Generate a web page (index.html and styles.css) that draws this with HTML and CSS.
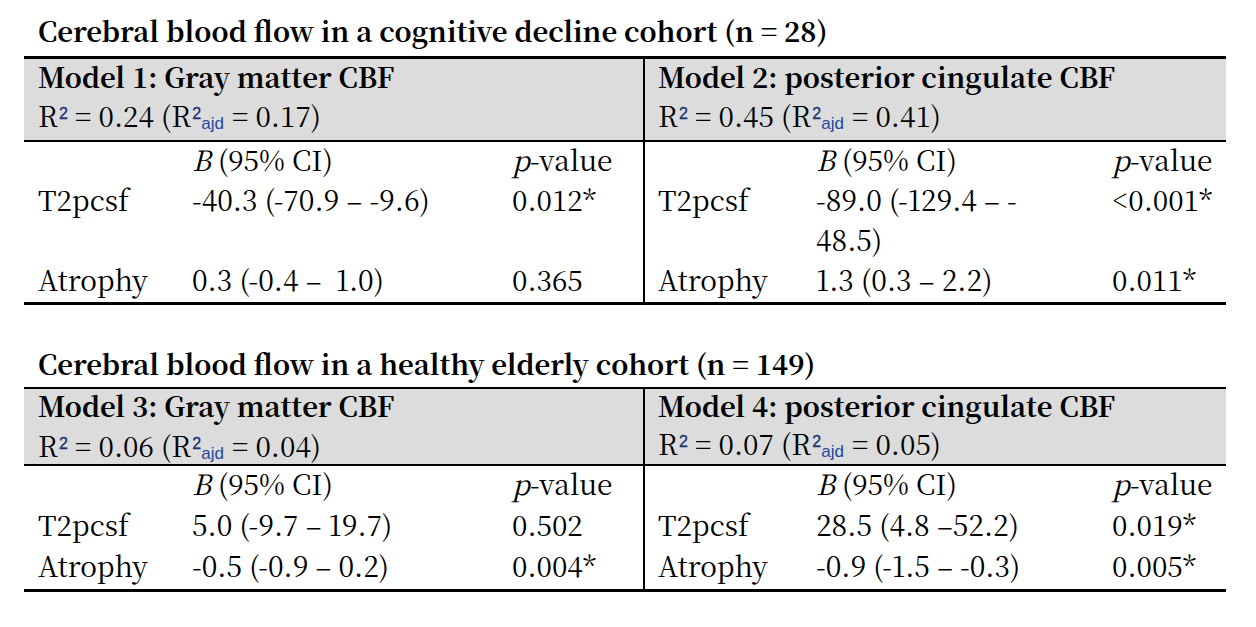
FILE: index.html
```html
<!DOCTYPE html>
<html lang="en">
<head>
<meta charset="utf-8">
<title>Cerebral blood flow models</title>
<link rel="stylesheet" href="styles.css">
</head>
<body>
<main class="page">
  <section class="block first">
    <h2 class="title">Cerebral blood flow in a cognitive decline cohort (n = 28)</h2>
    <div class="tbl t1">
      <div class="hd left">
        <div class="model">Model 1: Gray matter CBF</div>
        <div class="r2">R<sup class="sq">2</sup> = 0.24 (R<sup class="sq">2</sup><sub class="aj">ajd</sub> = 0.17)</div>
      </div>
      <div class="hd right">
        <div class="model">Model 2: posterior cingulate CBF</div>
        <div class="r2">R<sup class="sq">2</sup> = 0.45 (R<sup class="sq">2</sup><sub class="aj">ajd</sub> = 0.41)</div>
      </div>

      <div class="c c1"></div>
      <div class="c c2"><i>B</i> (95% CI)</div>
      <div class="c c3"><i>p</i>-value</div>
      <div class="c c4"></div>
      <div class="c c5"><i>B</i> (95% CI)</div>
      <div class="c c6"><i>p</i>-value</div>

      <div class="c c1">T2pcsf</div>
      <div class="c c2">-40.3 (-70.9 – -9.6)</div>
      <div class="c c3">0.012*</div>
      <div class="c c4">T2pcsf</div>
      <div class="c c5">-89.0 (-129.4 – -<br>48.5)</div>
      <div class="c c6">&lt;0.001*</div>

      <div class="c c1">Atrophy</div>
      <div class="c c2">0.3 (-0.4 – &nbsp;1.0)</div>
      <div class="c c3">0.365</div>
      <div class="c c4">Atrophy</div>
      <div class="c c5">1.3 (0.3 – 2.2)</div>
      <div class="c c6">0.011*</div>
    </div>
  </section>

  <section class="block second">
    <h2 class="title">Cerebral blood flow in a healthy elderly cohort (n = 149)</h2>
    <div class="tbl t2">
      <div class="hd left">
        <div class="model">Model 3: Gray matter CBF</div>
        <div class="r2">R<sup class="sq">2</sup> = 0.06 (R<sup class="sq">2</sup><sub class="aj">ajd</sub> = 0.04)</div>
      </div>
      <div class="hd right">
        <div class="model">Model 4: posterior cingulate CBF</div>
        <div class="r2">R<sup class="sq">2</sup> = 0.07 (R<sup class="sq">2</sup><sub class="aj">ajd</sub> = 0.05)</div>
      </div>

      <div class="c c1"></div>
      <div class="c c2"><i>B</i> (95% CI)</div>
      <div class="c c3"><i>p</i>-value</div>
      <div class="c c4"></div>
      <div class="c c5"><i>B</i> (95% CI)</div>
      <div class="c c6"><i>p</i>-value</div>

      <div class="c c1">T2pcsf</div>
      <div class="c c2">5.0 (-9.7 – 19.7)</div>
      <div class="c c3">0.502</div>
      <div class="c c4">T2pcsf</div>
      <div class="c c5">28.5 (4.8 –52.2)</div>
      <div class="c c6">0.019*</div>

      <div class="c c1">Atrophy</div>
      <div class="c c2">-0.5 (-0.9 – 0.2)</div>
      <div class="c c3">0.004*</div>
      <div class="c c4">Atrophy</div>
      <div class="c c5">-0.9 (-1.5 – -0.3)</div>
      <div class="c c6">0.005*</div>
    </div>
  </section>
</main>
</body>
</html>
```

FILE: styles.css
```css
* { box-sizing: border-box; }

body {
  margin: 0;
  background: #ffffff;
  color: #000000;
  font-family: "Noto Serif CJK SC", "DejaVu Serif", serif;
}

.page {
  padding: 15px 0 0 24px;
}

.title {
  margin: 0 0 11px 14px;
  font-family: "Noto Serif CJK SC", "DejaVu Serif", serif;
  font-weight: bold;
  font-size: 27.5px;
  line-height: 30px;
  white-space: nowrap;
}

.second { margin-top: 43px; }
.second .title { margin-bottom: 9px; }

.tbl {
  display: grid;
  grid-template-columns: 154px 320px 147px 157px 296px 128px;
  width: 1202px;
  border-top: 3px solid #000;
  border-bottom: 3px solid #000;
  font-size: 28px;
  line-height: 40px;
}

.t2 {
  border-top-width: 2px;
  line-height: 41px;
}

.hd {
  grid-column: span 3;
  background: #dcdcdc;
  border-bottom: 2px solid #000;
  padding: 0 14px 6px 14px;
}

.hd.left { border-right: 2px solid #000; }
.hd.right { padding-left: 13px; }

.model {
  margin-top: -2px;
  font-weight: bold;
  font-size: 27.5px;
  line-height: 39px;
  white-space: nowrap;
}

.r2 {
  line-height: 38px;
  white-space: nowrap;
}

.t2 .hd { padding-bottom: 0; }
.t2 .model { margin-top: -3px; }
.t2 .left .r2 { padding-top: 1px; }
.t2 .right .r2 { line-height: 37px; }

.sq {
  font-family: "Liberation Sans", sans-serif;
  font-size: 16px;
  line-height: 0;
  color: #17306e;
  vertical-align: 8px;
  margin-left: 1px;
  -webkit-text-stroke: 0.3px #17306e;
}

.aj {
  font-family: "Liberation Sans", sans-serif;
  font-size: 17px;
  line-height: 0;
  color: #24489a;
  vertical-align: -2px;
  margin-right: 1px;
}

.c {
  margin-top: -3px;
  padding-left: 14px;
  padding-bottom: 3px;
  white-space: nowrap;
}

.c3 { border-right: 2px solid #000; }
.c4 { padding-left: 13px; }

.c i { font-style: italic; }
```
